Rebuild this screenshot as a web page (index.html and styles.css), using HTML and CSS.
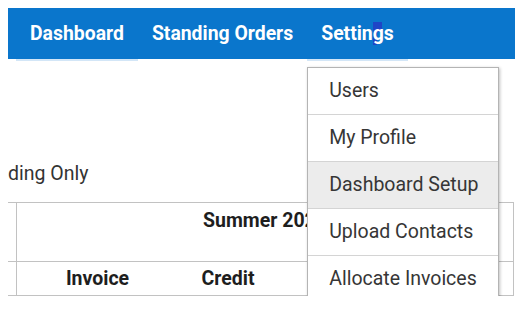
FILE: index.html
```html
<!DOCTYPE html>
<html lang="en">
<head>
  <meta charset="UTF-8">
  <title>Settings</title>
  <link rel="stylesheet" href="styles.css">
</head>
<body>
  <nav class="menu">
    <a class="item activo" href="#">Dashboard</a>
    <a class="item" href="#">Standing Orders</a>
    <div class="item activo desplegable">
      <a href="#">Settin<span class="sel">g</span>s</a>
      <ul class="submenu">
        <li><a href="#">Users</a></li>
        <li><a href="#">My Profile</a></li>
        <li class="hover"><a href="#">Dashboard Setup</a></li>
        <li><a href="#">Upload Contacts</a></li>
        <li><a href="#">Allocate Invoices</a></li>
      </ul>
    </div>
  </nav>

  <p class="filtro">ding Only</p>

  <table class="tabla">
    <tr class="fila-periodo">
      <th class="hueco"></th>
      <th colspan="3">Summer 2023</th>
    </tr>
    <tr class="fila-columnas">
      <th class="hueco"></th>
      <th class="col-a">Invoice</th>
      <th class="col-b">Credit</th>
      <th class="col-c"></th>
    </tr>
  </table>
</body>
</html>
```

FILE: styles.css
```css
body { font-family: Roboto, "Liberation Sans", Arial, sans-serif; margin: 8px; color: #333; }
a { text-decoration: none; color: inherit; }
.menu { display: flex; background-color: #0a76cc; height: 51px; padding-left: 8px; }
.item { position: relative; display: block; box-sizing: border-box; height: 53px; padding: 0 14px; line-height: 51px; color: white; font-weight: bold; font-size: 19.4px; border-bottom: 2px solid transparent; }
.activo { border-bottom-color: #d3e6f7; }
.sel { background: linear-gradient(#1f45c6, #1f45c6) left top / 4px 100% no-repeat, linear-gradient(#1f45c6, #1f45c6) left top / 9px 45% no-repeat; }
.submenu { position: absolute; top: 59px; left: 0; z-index: 2; width: 190px; margin: 0; padding: 0; list-style: none; background: white; border: 1px solid #b4b4b4; box-shadow: 1px 1px 3px rgba(0,0,0,0.25); }
.submenu li { border-top: 1px solid #d4d4d4; }
.submenu li:first-child { border-top: none; }
.submenu a { display: block; height: 46px; line-height: 46px; padding-left: 21px; color: #363636; font-weight: normal; font-size: 19.5px; }
.submenu .hover { background-color: #ececec; }
.filtro { margin: 103px 0 16px; font-size: 19.5px; line-height: 24px; }
.tabla { border-collapse: collapse; width: 506px; font-size: 19.5px; color: #1e1e1e; }
.tabla th { border-top: 1px solid #c2c2c2; border-bottom: 1px solid #c2c2c2; padding: 0; }
.tabla th:last-child { border-right: 1px solid #c2c2c2; }
.hueco { width: 8px; border-right: 1px solid #c2c2c2; }
.fila-periodo th { height: 52px; vertical-align: top; padding-top: 6px; }
.fila-columnas th { height: 33px; }
.col-a { width: 161px; }
.col-b { width: 100px; }
```
